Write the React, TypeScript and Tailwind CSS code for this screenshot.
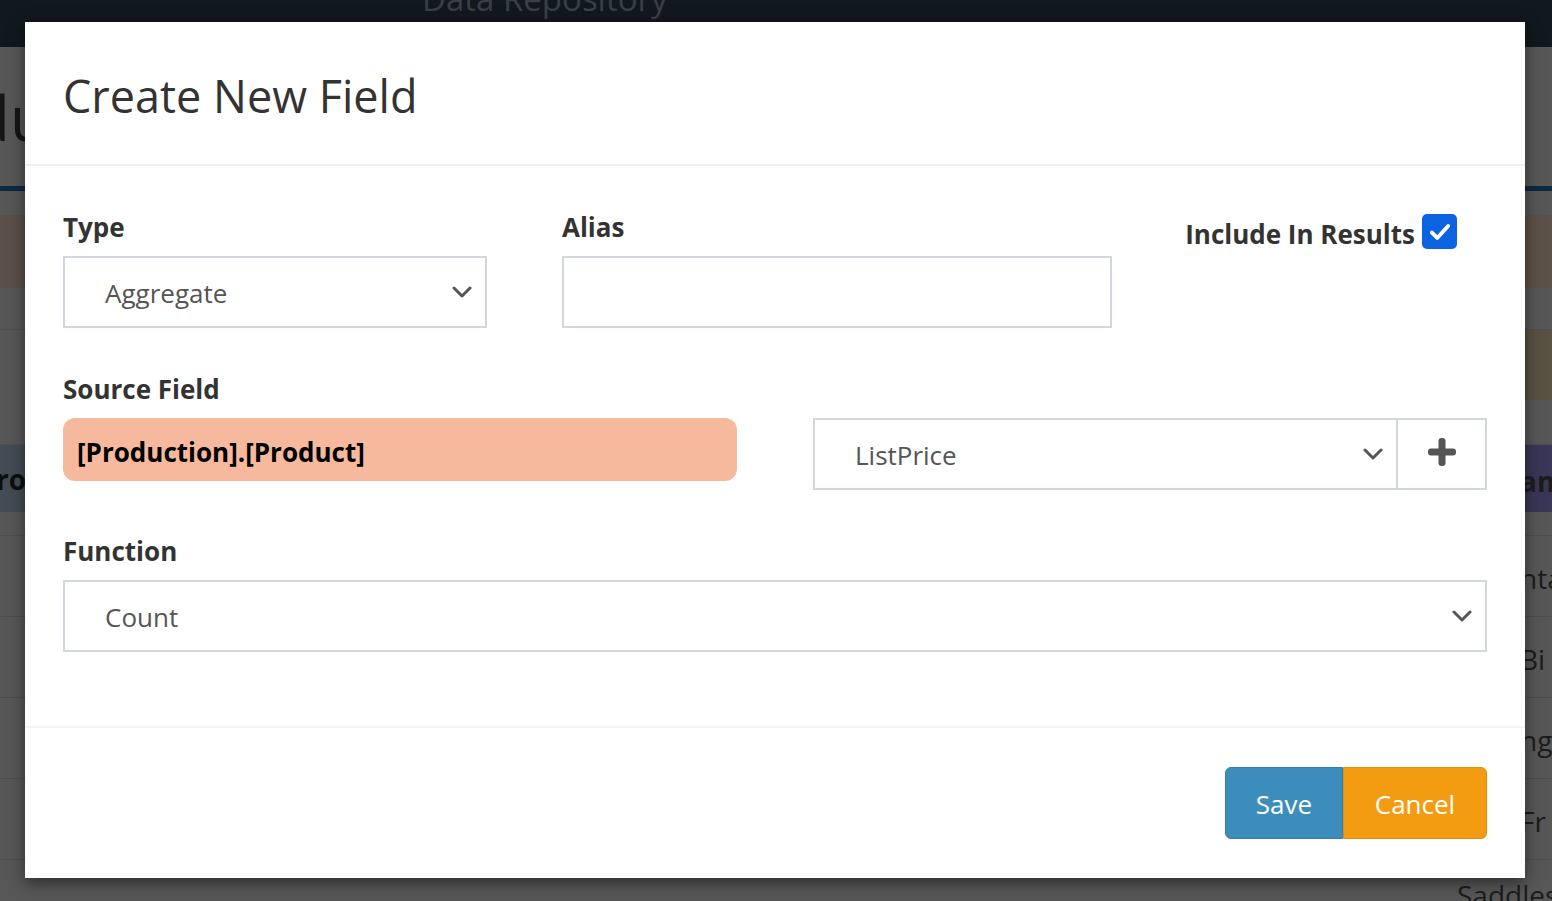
import { ReactNode } from "react"

const font = { fontFamily: '"Open Sans", "Noto Sans", sans-serif' }

function Chevron() {
  return (
    <svg viewBox="0 0 20 12" className="h-[12px] w-[20px]" fill="none" stroke="#555" strokeWidth="3" strokeLinecap="round" strokeLinejoin="round">
      <path d="M2 2l8 8 8-8" />
    </svg>
  )
}

function Select({ value, className = "" }: { value: string; className?: string }) {
  return (
    <div className={`flex h-[72px] items-center justify-between border-2 border-[#d2d6de] bg-white pl-[40px] pr-[13px] ${className}`}>
      <span className="mt-[3px] text-[26px] text-[#555]">{value}</span>
      <Chevron />
    </div>
  )
}

function Label({ children }: { children: ReactNode }) {
  return <div className="mb-[16px] h-[30px] pt-[2px] text-[26px] font-bold leading-[30px] text-[#333]">{children}</div>
}

function EdgeRow({ h, left, right, leftText, rightText, bold = false, border = true }: {
  h: string
  left?: string
  right?: string
  leftText?: string
  rightText?: string
  bold?: boolean
  border?: boolean
}) {
  return (
    <div className={`flex ${h} justify-between ${border ? "border-b border-[#4d4d4d]" : ""}`}>
      <div className={`flex w-[60px] items-center justify-end overflow-hidden pr-[34px] ${left ?? ""}`}>
        <span className={`text-[28px] text-[#0e0e0e] ${bold ? "font-bold" : ""}`}>{leftText}</span>
      </div>
      <div className={`flex w-[60px] items-center overflow-hidden pl-[28px] pt-[4px] ${right ?? ""}`}>
        <span className={`whitespace-nowrap text-[28px] text-[#1c1c1c] ${bold ? "font-bold text-[#0e0e0e]" : ""}`}>{rightText}</span>
      </div>
    </div>
  )
}

export default function App() {
  return (
    <div className="relative h-[901px] w-[1552px] overflow-hidden bg-[#575757]" style={font}>
      {/* page behind the dimmed backdrop */}
      <div className="h-[47px] overflow-hidden bg-[#12181f]">
        <div className="ml-[422px] mt-[-18px] text-[33px] leading-[33px] text-[#3a3f45]">Data Repository</div>
      </div>
      <div className="flex h-[139px] items-center">
        <span className="ml-[-28px] text-[62px] leading-none text-[#161616]">du</span>
      </div>
      <div className="h-[5px] bg-[#0c2a41]" />
      <div className="h-[24px]" />
      <EdgeRow h="h-[73px]" left="bg-[#5b5049]" right="bg-[#5c5149]" border={false} />
      <div className="h-[42px] border-b border-[#4f4f4f]" />
      <EdgeRow h="h-[70px]" right="bg-[#595142]" border={false} />
      <div className="h-[45px] border-b border-[#4f4f4f]" />
      <EdgeRow h="h-[67px]" left="bg-[#444c55]" right="bg-[#3a3657]" leftText="ro" rightText="am" bold border={false} />
      <div className="h-[24px] border-b border-[#4f4f4f]" />
      <EdgeRow h="h-[81px]" rightText="nta" />
      <EdgeRow h="h-[81px]" rightText="Bi" />
      <EdgeRow h="h-[81px]" rightText="ng" />
      <EdgeRow h="h-[81px]" rightText="Fr" />
      <div className="flex justify-end">
        <span className="mt-[14px] w-[95px] text-[28px] text-[#1c1c1c]">Saddles</span>
      </div>

      {/* modal */}
      <div className="absolute left-[25px] top-[22px] flex h-[856px] w-[1500px] flex-col bg-white shadow-[0_5px_15px_rgba(0,0,0,0.5)]">
        <div className="h-[144px] border-b-2 border-[#f0f0f0] px-[38px] pt-[51px]">
          <h1 className="text-[45px] font-normal leading-[45px] text-[#333]">Create New Field</h1>
        </div>

        <div className="flex flex-1 flex-col border-b-2 border-[#f4f4f4] px-[38px] pt-[44px]">
          <div className="flex">
            <div className="w-[424px]">
              <Label>Type</Label>
              <Select value="Aggregate" />
            </div>
            <div className="ml-[75px] w-[550px]">
              <Label>Alias</Label>
              <div className="h-[72px] border-2 border-[#d2d6de]" />
            </div>
            <div className="flex flex-1 items-start justify-end pr-[30px] pt-[4px]">
              <span className="mr-[7px] mt-[5px] text-[26px] font-bold leading-[30px] text-[#333]">Include In Results</span>
              <div className="flex h-[35px] w-[35px] items-center justify-center rounded-[5px] bg-[#0b63e2]">
                <svg viewBox="0 0 24 24" className="h-[26px] w-[26px]" fill="none" stroke="white" strokeWidth="3.6" strokeLinecap="round" strokeLinejoin="round">
                  <path d="M4.5 12.5l5 5 10-11" />
                </svg>
              </div>
            </div>
          </div>

          <div className="mt-[44px]">
            <Label>Source Field</Label>
            <div className="flex items-start gap-[76px]">
              <div className="flex h-[63px] w-[674px] items-center rounded-[12px] bg-[#f7b99e] px-[14px] pt-[5px]">
                <span className="text-[26px] font-bold text-black">[Production].[Product]</span>
              </div>
              <div className="flex h-[72px] flex-1 border-2 border-[#d2d6de]">
                <div className="flex flex-1 items-center justify-between pl-[40px] pr-[13px]">
                  <span className="mt-[2px] text-[26px] text-[#555]">ListPrice</span>
                  <Chevron />
                </div>
                <div className="flex w-[89px] items-center justify-center border-l-2 border-[#d2d6de]">
                  <svg viewBox="0 0 28 28" className="mb-[4px] h-[28px] w-[28px]" fill="#555">
                    <rect x="10.5" y="0" width="7" height="28" rx="3" />
                    <rect x="0" y="10.5" width="28" height="7" rx="3" />
                  </svg>
                </div>
              </div>
            </div>
          </div>

          <div className="mt-[44px]">
            <Label>Function</Label>
            <Select value="Count" />
          </div>
        </div>

        <div className="flex h-[150px] items-center justify-end px-[38px]">
          <button className="h-[72px] w-[118px] rounded-l-[6px] border border-[#367fa9] bg-[#3c8dbc] pt-[2px] text-[26px] text-white">Save</button>
          <button className="h-[72px] w-[144px] rounded-r-[6px] border border-[#e08e0b] bg-[#f39c12] pt-[2px] text-[26px] text-white">Cancel</button>
        </div>
      </div>
    </div>
  )
}
